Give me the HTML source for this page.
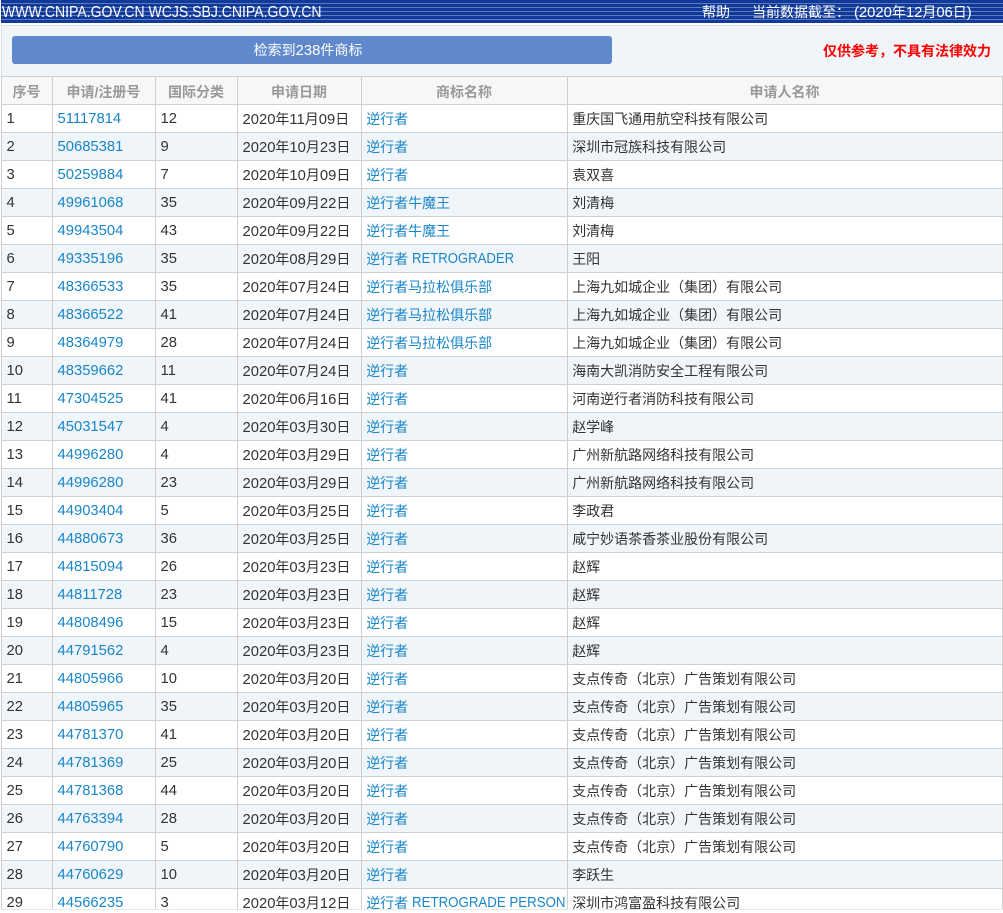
<!DOCTYPE html>
<html lang="zh"><head><meta charset="utf-8"><title>商标检索</title>
<style>
html,body{margin:0;padding:0;background:#fff;width:1003px;height:913px;overflow:hidden}
body{position:relative;font-family:"Liberation Sans","Noto Sans CJK SC",sans-serif;color:#333}
#top{position:absolute;left:1px;top:0;width:1002px;height:23px;background:repeating-linear-gradient(180deg,#10399a 0,#10399a 3px,#5f7cba 3px,#5f7cba 4px);color:#fff;overflow:hidden}
#top:after{content:"";position:absolute;left:0;right:0;bottom:0;height:2px;background:#10399a}
#top span{position:absolute;top:1px;line-height:23px;white-space:nowrap;z-index:1}
#top b{font-weight:normal;font-size:14px}
#panel{position:absolute;left:1px;top:25px;width:1002px;height:51px;background:#f0f5f9;border-top:1px solid #ddd;border-left:1px solid #ddd;box-sizing:border-box}
#btn{position:absolute;left:12px;top:36px;width:600px;height:28px;box-sizing:border-box;padding-right:8px;background:#6088cc;border-radius:3px;color:#fff;font-size:14px;line-height:28px;text-align:center}
#btn i{font-style:normal;font-size:14.8px}
#warn{position:absolute;left:823px;top:41px;font-size:14px;line-height:20px;color:#f00;font-weight:bold;white-space:nowrap}
#wrap{position:absolute;left:1px;top:76px;width:1002px;height:833px;overflow:hidden;border-bottom:1px solid #e8e8e8;box-sizing:content-box}
table{border-collapse:collapse;table-layout:fixed;width:1001px;margin:0;font-size:14.8px}
th,td{border:1px solid #d0d0d0;height:28px;padding:1px 0 0 4.5px;white-space:nowrap;overflow:hidden;box-sizing:border-box;line-height:20px;text-align:left;font-weight:normal}
td:nth-child(n+5){padding-left:4.2px}
tr{height:28px}
th{background:#f7f7f7;color:#999;font-weight:bold;font-size:14px;text-align:center;padding:2px 1px 0 0}
tbody tr:nth-child(even) td{background:#f0f5f9}
td b{font-weight:normal;font-size:14px}
td a{color:#1a86c8;text-decoration:none}
td a u{text-decoration:none;font-size:14.5px;display:inline-block;transform:scaleX(.905);transform-origin:0 50%;line-height:20px;vertical-align:top}
td a u.w{transform:scaleX(.916)}
</style></head><body>
<div id="top"><span style="left:1px;font-size:15.5px;transform:scaleX(.905);transform-origin:0 50%">WWW.CNIPA.GOV.CN WCJS.SBJ.CNIPA.GOV.CN</span><span style="left:701px;font-size:14px">帮助</span><span style="left:751px;font-size:14px">当前数据截至：</span><span style="left:853px;font-size:14.8px">(2020<b>年</b>12<b>月</b>06<b>日</b>)</span></div>
<div id="panel"></div>
<div id="btn">检索到<i>238</i>件商标</div>
<div id="warn">仅供参考，不具有法律效力</div>
<div id="wrap"><table>
<colgroup><col style="width:51px"><col style="width:103px"><col style="width:82px"><col style="width:124px"><col style="width:206px"><col style="width:435px"></colgroup>
<thead><tr><th>序号</th><th>申请/注册号</th><th>国际分类</th><th>申请日期</th><th>商标名称</th><th>申请人名称</th></tr></thead>
<tbody>
<tr><td>1</td><td><a>51117814</a></td><td>12</td><td>2020<b>年</b>11<b>月</b>09<b>日</b></td><td><a><b>逆行者</b></a></td><td><b>重庆国飞通用航空科技有限公司</b></td></tr>
<tr><td>2</td><td><a>50685381</a></td><td>9</td><td>2020<b>年</b>10<b>月</b>23<b>日</b></td><td><a><b>逆行者</b></a></td><td><b>深圳市冠族科技有限公司</b></td></tr>
<tr><td>3</td><td><a>50259884</a></td><td>7</td><td>2020<b>年</b>10<b>月</b>09<b>日</b></td><td><a><b>逆行者</b></a></td><td><b>袁双喜</b></td></tr>
<tr><td>4</td><td><a>49961068</a></td><td>35</td><td>2020<b>年</b>09<b>月</b>22<b>日</b></td><td><a><b>逆行者牛魔王</b></a></td><td><b>刘清梅</b></td></tr>
<tr><td>5</td><td><a>49943504</a></td><td>43</td><td>2020<b>年</b>09<b>月</b>22<b>日</b></td><td><a><b>逆行者牛魔王</b></a></td><td><b>刘清梅</b></td></tr>
<tr><td>6</td><td><a>49335196</a></td><td>35</td><td>2020<b>年</b>08<b>月</b>29<b>日</b></td><td><a><b>逆行者</b> <u>RETROGRADER</u></a></td><td><b>王阳</b></td></tr>
<tr><td>7</td><td><a>48366533</a></td><td>35</td><td>2020<b>年</b>07<b>月</b>24<b>日</b></td><td><a><b>逆行者马拉松俱乐部</b></a></td><td><b>上海九如城企业（集团）有限公司</b></td></tr>
<tr><td>8</td><td><a>48366522</a></td><td>41</td><td>2020<b>年</b>07<b>月</b>24<b>日</b></td><td><a><b>逆行者马拉松俱乐部</b></a></td><td><b>上海九如城企业（集团）有限公司</b></td></tr>
<tr><td>9</td><td><a>48364979</a></td><td>28</td><td>2020<b>年</b>07<b>月</b>24<b>日</b></td><td><a><b>逆行者马拉松俱乐部</b></a></td><td><b>上海九如城企业（集团）有限公司</b></td></tr>
<tr><td>10</td><td><a>48359662</a></td><td>11</td><td>2020<b>年</b>07<b>月</b>24<b>日</b></td><td><a><b>逆行者</b></a></td><td><b>海南大凯消防安全工程有限公司</b></td></tr>
<tr><td>11</td><td><a>47304525</a></td><td>41</td><td>2020<b>年</b>06<b>月</b>16<b>日</b></td><td><a><b>逆行者</b></a></td><td><b>河南逆行者消防科技有限公司</b></td></tr>
<tr><td>12</td><td><a>45031547</a></td><td>4</td><td>2020<b>年</b>03<b>月</b>30<b>日</b></td><td><a><b>逆行者</b></a></td><td><b>赵学峰</b></td></tr>
<tr><td>13</td><td><a>44996280</a></td><td>4</td><td>2020<b>年</b>03<b>月</b>29<b>日</b></td><td><a><b>逆行者</b></a></td><td><b>广州新航路网络科技有限公司</b></td></tr>
<tr><td>14</td><td><a>44996280</a></td><td>23</td><td>2020<b>年</b>03<b>月</b>29<b>日</b></td><td><a><b>逆行者</b></a></td><td><b>广州新航路网络科技有限公司</b></td></tr>
<tr><td>15</td><td><a>44903404</a></td><td>5</td><td>2020<b>年</b>03<b>月</b>25<b>日</b></td><td><a><b>逆行者</b></a></td><td><b>李政君</b></td></tr>
<tr><td>16</td><td><a>44880673</a></td><td>36</td><td>2020<b>年</b>03<b>月</b>25<b>日</b></td><td><a><b>逆行者</b></a></td><td><b>咸宁妙语茶香茶业股份有限公司</b></td></tr>
<tr><td>17</td><td><a>44815094</a></td><td>26</td><td>2020<b>年</b>03<b>月</b>23<b>日</b></td><td><a><b>逆行者</b></a></td><td><b>赵辉</b></td></tr>
<tr><td>18</td><td><a>44811728</a></td><td>23</td><td>2020<b>年</b>03<b>月</b>23<b>日</b></td><td><a><b>逆行者</b></a></td><td><b>赵辉</b></td></tr>
<tr><td>19</td><td><a>44808496</a></td><td>15</td><td>2020<b>年</b>03<b>月</b>23<b>日</b></td><td><a><b>逆行者</b></a></td><td><b>赵辉</b></td></tr>
<tr><td>20</td><td><a>44791562</a></td><td>4</td><td>2020<b>年</b>03<b>月</b>23<b>日</b></td><td><a><b>逆行者</b></a></td><td><b>赵辉</b></td></tr>
<tr><td>21</td><td><a>44805966</a></td><td>10</td><td>2020<b>年</b>03<b>月</b>20<b>日</b></td><td><a><b>逆行者</b></a></td><td><b>支点传奇（北京）广告策划有限公司</b></td></tr>
<tr><td>22</td><td><a>44805965</a></td><td>35</td><td>2020<b>年</b>03<b>月</b>20<b>日</b></td><td><a><b>逆行者</b></a></td><td><b>支点传奇（北京）广告策划有限公司</b></td></tr>
<tr><td>23</td><td><a>44781370</a></td><td>41</td><td>2020<b>年</b>03<b>月</b>20<b>日</b></td><td><a><b>逆行者</b></a></td><td><b>支点传奇（北京）广告策划有限公司</b></td></tr>
<tr><td>24</td><td><a>44781369</a></td><td>25</td><td>2020<b>年</b>03<b>月</b>20<b>日</b></td><td><a><b>逆行者</b></a></td><td><b>支点传奇（北京）广告策划有限公司</b></td></tr>
<tr><td>25</td><td><a>44781368</a></td><td>44</td><td>2020<b>年</b>03<b>月</b>20<b>日</b></td><td><a><b>逆行者</b></a></td><td><b>支点传奇（北京）广告策划有限公司</b></td></tr>
<tr><td>26</td><td><a>44763394</a></td><td>28</td><td>2020<b>年</b>03<b>月</b>20<b>日</b></td><td><a><b>逆行者</b></a></td><td><b>支点传奇（北京）广告策划有限公司</b></td></tr>
<tr><td>27</td><td><a>44760790</a></td><td>5</td><td>2020<b>年</b>03<b>月</b>20<b>日</b></td><td><a><b>逆行者</b></a></td><td><b>支点传奇（北京）广告策划有限公司</b></td></tr>
<tr><td>28</td><td><a>44760629</a></td><td>10</td><td>2020<b>年</b>03<b>月</b>20<b>日</b></td><td><a><b>逆行者</b></a></td><td><b>李跃生</b></td></tr>
<tr><td>29</td><td><a>44566235</a></td><td>3</td><td>2020<b>年</b>03<b>月</b>12<b>日</b></td><td><a><b>逆行者</b> <u class="w">RETROGRADE PERSON</u></a></td><td><b>深圳市鸿富盈科技有限公司</b></td></tr>
</tbody></table></div>
</body></html>
